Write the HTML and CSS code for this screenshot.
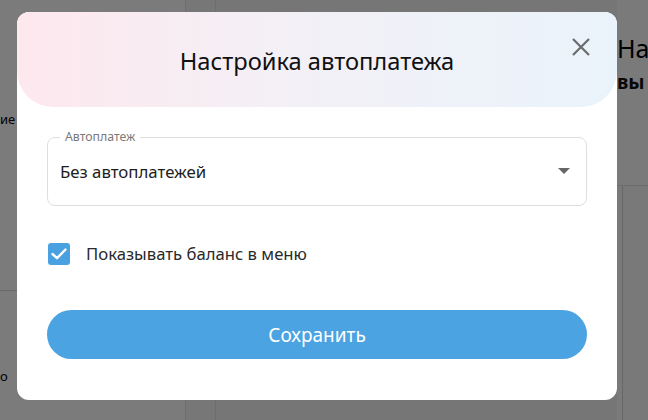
FILE: index.html
```html
<!DOCTYPE html>
<html lang="ru">
<head>
<meta charset="utf-8">
<title>Настройка автоплатежа</title>
<link rel="stylesheet" href="styles.css">
</head>
<body>
  <div class="page">
    <aside class="sidebar">
      <div class="side-top"><span class="side-text">ие</span></div>
      <div class="side-bottom"><span class="side-text">о</span></div>
    </aside>
    <main class="main">
      <div class="main-col"></div>
      <div class="main-right">
        <div class="right-head">
          <div class="right-title">На</div>
          <div class="right-sub">вы</div>
        </div>
        <div class="right-body"></div>
      </div>
    </main>
  </div>

  <div class="overlay"></div>

  <div class="modal" role="dialog" aria-labelledby="modal-title">
    <header class="modal-head">
      <h2 class="modal-title" id="modal-title">Настройка автоплатежа</h2>
      <button class="close" type="button" aria-label="Закрыть">
        <svg width="20" height="20" viewBox="0 0 20 20"><path d="M2 2 L18 18 M18 2 L2 18" stroke="#6b6b6b" stroke-width="2.2" fill="none"/></svg>
      </button>
    </header>

    <div class="modal-body">
      <fieldset class="field">
        <legend class="field-label">Автоплатеж</legend>
        <div class="select">
          <span class="select-value">Без автоплатежей</span>
          <svg class="select-arrow" width="12" height="6" viewBox="0 0 12 6"><path d="M0 0 H12 L6 6 Z" fill="#666"/></svg>
        </div>
      </fieldset>

      <label class="check">
        <span class="check-box">
          <svg width="16" height="12" viewBox="0 0 16 12"><path d="M1.5 6 L6 10.2 L14.5 1.5" stroke="#fff" stroke-width="2.4" fill="none" stroke-linecap="round" stroke-linejoin="round"/></svg>
        </span>
        <span class="check-label">Показывать баланс в меню</span>
      </label>

      <button class="save" type="button">Сохранить</button>
    </div>
  </div>
</body>
</html>
```

FILE: styles.css
```css
* {
  box-sizing: border-box;
}

html, body {
  margin: 0;
  padding: 0;
  width: 648px;
  height: 420px;
  overflow: hidden;
}

body {
  font-family: "Noto Sans", "Open Sans", sans-serif;
  background: #eeeeee;
  position: relative;
}

/* page behind the dialog */
.page {
  display: flex;
  height: 420px;
}

.sidebar {
  width: 186px;
  flex-shrink: 0;
  display: flex;
  flex-direction: column;
  background: #f6f6f6;
  border-right: 1px solid #dedede;
}

.side-top {
  height: 291px;
  border-bottom: 1px solid #d2d2d2;
  padding: 110px 0 0 0;
}

.side-bottom {
  flex: 1;
  padding: 76px 0 0 0;
}

.side-text {
  display: block;
  font-size: 13px;
  color: #000;
  line-height: 18px;
}

.main {
  flex: 1;
  display: flex;
  padding-left: 29px;
}

.main-col {
  width: 402px;
  flex-shrink: 0;
  background: #ececec;
  border-left: 1px solid #dcdcdc;
}

.main-right {
  flex: 1;
  display: flex;
  flex-direction: column;
  background: #f4f4f4;
}

.right-head {
  height: 186px;
  padding: 32px 0 0 0;
  white-space: nowrap;
  border-bottom: 1px solid #dadada;
  display: flex;
  flex-direction: column;
}

.right-title {
  font-size: 25px;
  color: #000;
  line-height: 32px;
}

.right-sub {
  font-size: 19px;
  font-weight: 700;
  color: #111;
  line-height: 24px;
  margin-top: 6px;
}

.right-body {
  flex: 1;
  margin-left: 5px;
  border-left: 1px solid #cfcfcf;
  background: #f2f2f2;
}

.overlay {
  position: absolute;
  inset: 0;
  background: rgba(0, 0, 0, 0.5);
}

/* dialog */
.modal {
  position: absolute;
  left: 17px;
  top: 12px;
  width: 600px;
  height: 388px;
  background: #ffffff;
  border-radius: 12px;
  overflow: hidden;
  display: flex;
  flex-direction: column;
}

.modal-head {
  height: 95px;
  flex-shrink: 0;
  background: linear-gradient(90deg, #fde8ee 0%, #f3f0f6 45%, #eaf3fb 100%);
  border-radius: 0 0 36px 36px;
  display: flex;
  align-items: center;
  justify-content: center;
  position: relative;
}

.modal-title {
  margin: 2px 0 0 0;
  font-size: 23.7px;
  font-weight: 400;
  color: #111;
}

.close {
  position: absolute;
  right: 26px;
  top: 25px;
  width: 20px;
  height: 20px;
  padding: 0;
  border: 0;
  background: none;
  display: flex;
}

.modal-body {
  padding: 23px 30px 0 30px;
  display: flex;
  flex-direction: column;
}

.field {
  margin: 0;
  padding: 0 12px;
  height: 76px;
  border: 1px solid #dedede;
  border-radius: 8px;
}

.field-label {
  padding: 0 5px;
  margin-left: 0;
  font-size: 12.3px;
  color: #7a7a7a;
  line-height: 14px;
}

.select {
  display: flex;
  align-items: center;
  justify-content: space-between;
  height: 60px;
  margin-top: -3px;
  padding-right: 4px;
}

.select-value {
  font-size: 16.8px;
  color: #1d1d1d;
}

.check {
  display: flex;
  align-items: center;
  gap: 16px;
  margin: 36px 0 0 1px;
}

.check-box {
  width: 22px;
  height: 22px;
  border-radius: 3px;
  background: #4aa1e1;
  display: flex;
  align-items: center;
  justify-content: center;
}

.check-label {
  font-size: 16.7px;
  color: #2a2a2a;
}

.save {
  margin-top: 45px;
  height: 49px;
  border: 0;
  border-radius: 25px;
  background: #4ba3e1;
  color: #ffffff;
  font-family: inherit;
  font-size: 19px;
  padding: 0;
}
```
